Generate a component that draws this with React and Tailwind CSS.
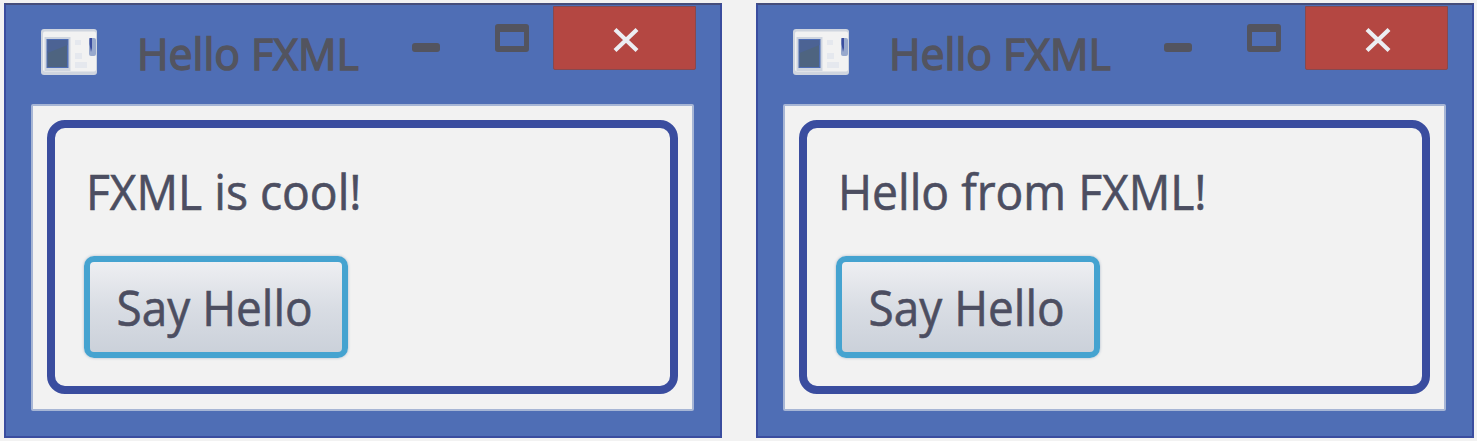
import React from 'react';

function AppIcon() {
  return (
    <svg className="mt-[22px] ml-[33px] h-[52px] w-[62px] shrink-0" viewBox="0 0 62 52">
      <rect x="2" y="2" width="56" height="46" rx="3" fill="#cfd5df" />
      <rect x="4" y="4.500" width="53" height="40" rx="2" fill="#f2f2f2" />
      <rect x="5.500" y="10" width="26" height="34" fill="#cfd5df" />
      <rect x="7.500" y="12" width="22" height="29" fill="#4f6eb5" />
      <path d="M8.500 24L28 17V40H8.500Z" fill="#4e6480" />
      <path d="M8.500 13h20v5l-20 8Z" fill="#4c6394" />
      <rect x="50" y="11" width="7" height="18" rx="2" fill="#98a9cd" />
      <path d="M50.500 11h2.500v10l-1 4l-1.500-8Z" fill="#3a4d9f" />
      <path d="M36 13h6v5h-6zM36 26h7v6h-7zM36 35h12v6h-12z" fill="#e5e8ee" />
    </svg>
  );
}

function TitleBar() {
  return (
    <div className="flex h-[99px] items-start">
      <AppIcon />
      <div className="mt-[18px] ml-[36px] w-[275px] text-[44px] leading-[60px] whitespace-nowrap text-[#53545f] [-webkit-text-stroke:1.5px_#53545f]">
        <span className="inline-block origin-left scale-x-[0.973]">Hello FXML</span>
      </div>
      <div className="mt-[38px] h-[9px] w-[28px] shrink-0 rounded-[3px] bg-[#53545f]" />
      <div className="mt-[19px] ml-[55px] h-[28px] w-[34px] shrink-0 rounded-[3px] border-x-[5px] border-t-[8px] border-b-[6px] border-[#53545f]" />
      <div className="mt-[1px] ml-[24px] flex h-[64px] w-[143px] shrink-0 items-center justify-center rounded-b-[2px] border border-[#86494f] bg-[#b44742]">
        <svg className="mt-[3px] ml-[2px] h-[26px] w-[28px]" viewBox="0 0 28 26">
          <path d="M3 2.500L25 23.500M25 2.500L3 23.500" stroke="#eceef2" strokeWidth="4.200" />
        </svg>
      </div>
    </div>
  );
}

function Window({ message }) {
  return (
    <section className="flex h-[435px] w-[718px] shrink-0 flex-col border-2 border-[#3a4d9f] border-t-[#454d7b] bg-[#4f6eb5]">
      <TitleBar />
      <div className="ml-[25px] h-[307px] w-[663px] rounded-[2px] border-2 border-[#a7b6d5] bg-[#f2f2f2] pt-[14px] pl-[14px]">
        <div className="flex h-[274px] w-[631px] flex-col items-start rounded-[18px] border-8 border-[#3a4d9f] bg-[#f2f2f2] pt-[28px] pl-[29px] text-[#4c4e61] [-webkit-text-stroke:0.6px_#4c4e61]">
          <p className="h-[70px] pl-[2px] text-[49px] leading-[70px] whitespace-nowrap">
            <span className="inline-block origin-left scale-x-[0.943]">{message}</span>
          </p>
          <button className="mt-[30px] h-[102px] w-[264px] rounded-[10px] border-[6px] border-[#45a3d0] bg-linear-to-b from-[#eeeff2] via-[#d9dde4] via-50% to-[#cbd1da] text-[49px] leading-[88px] whitespace-nowrap shadow-[0_0_3px_#aeb9c8]">
            <span className="inline-block -translate-x-[1px] scale-x-[0.937]">Say Hello</span>
          </button>
        </div>
      </div>
    </section>
  );
}

export default function App() {
  return (
    <main className="flex h-[441px] w-[1477px] gap-[34px] overflow-hidden bg-[#f2f2f2] pt-[3px] pl-[4px] font-['Open_Sans',sans-serif]">
      <Window message="FXML is cool!" />
      <Window message="Hello from FXML!" />
    </main>
  );
}
